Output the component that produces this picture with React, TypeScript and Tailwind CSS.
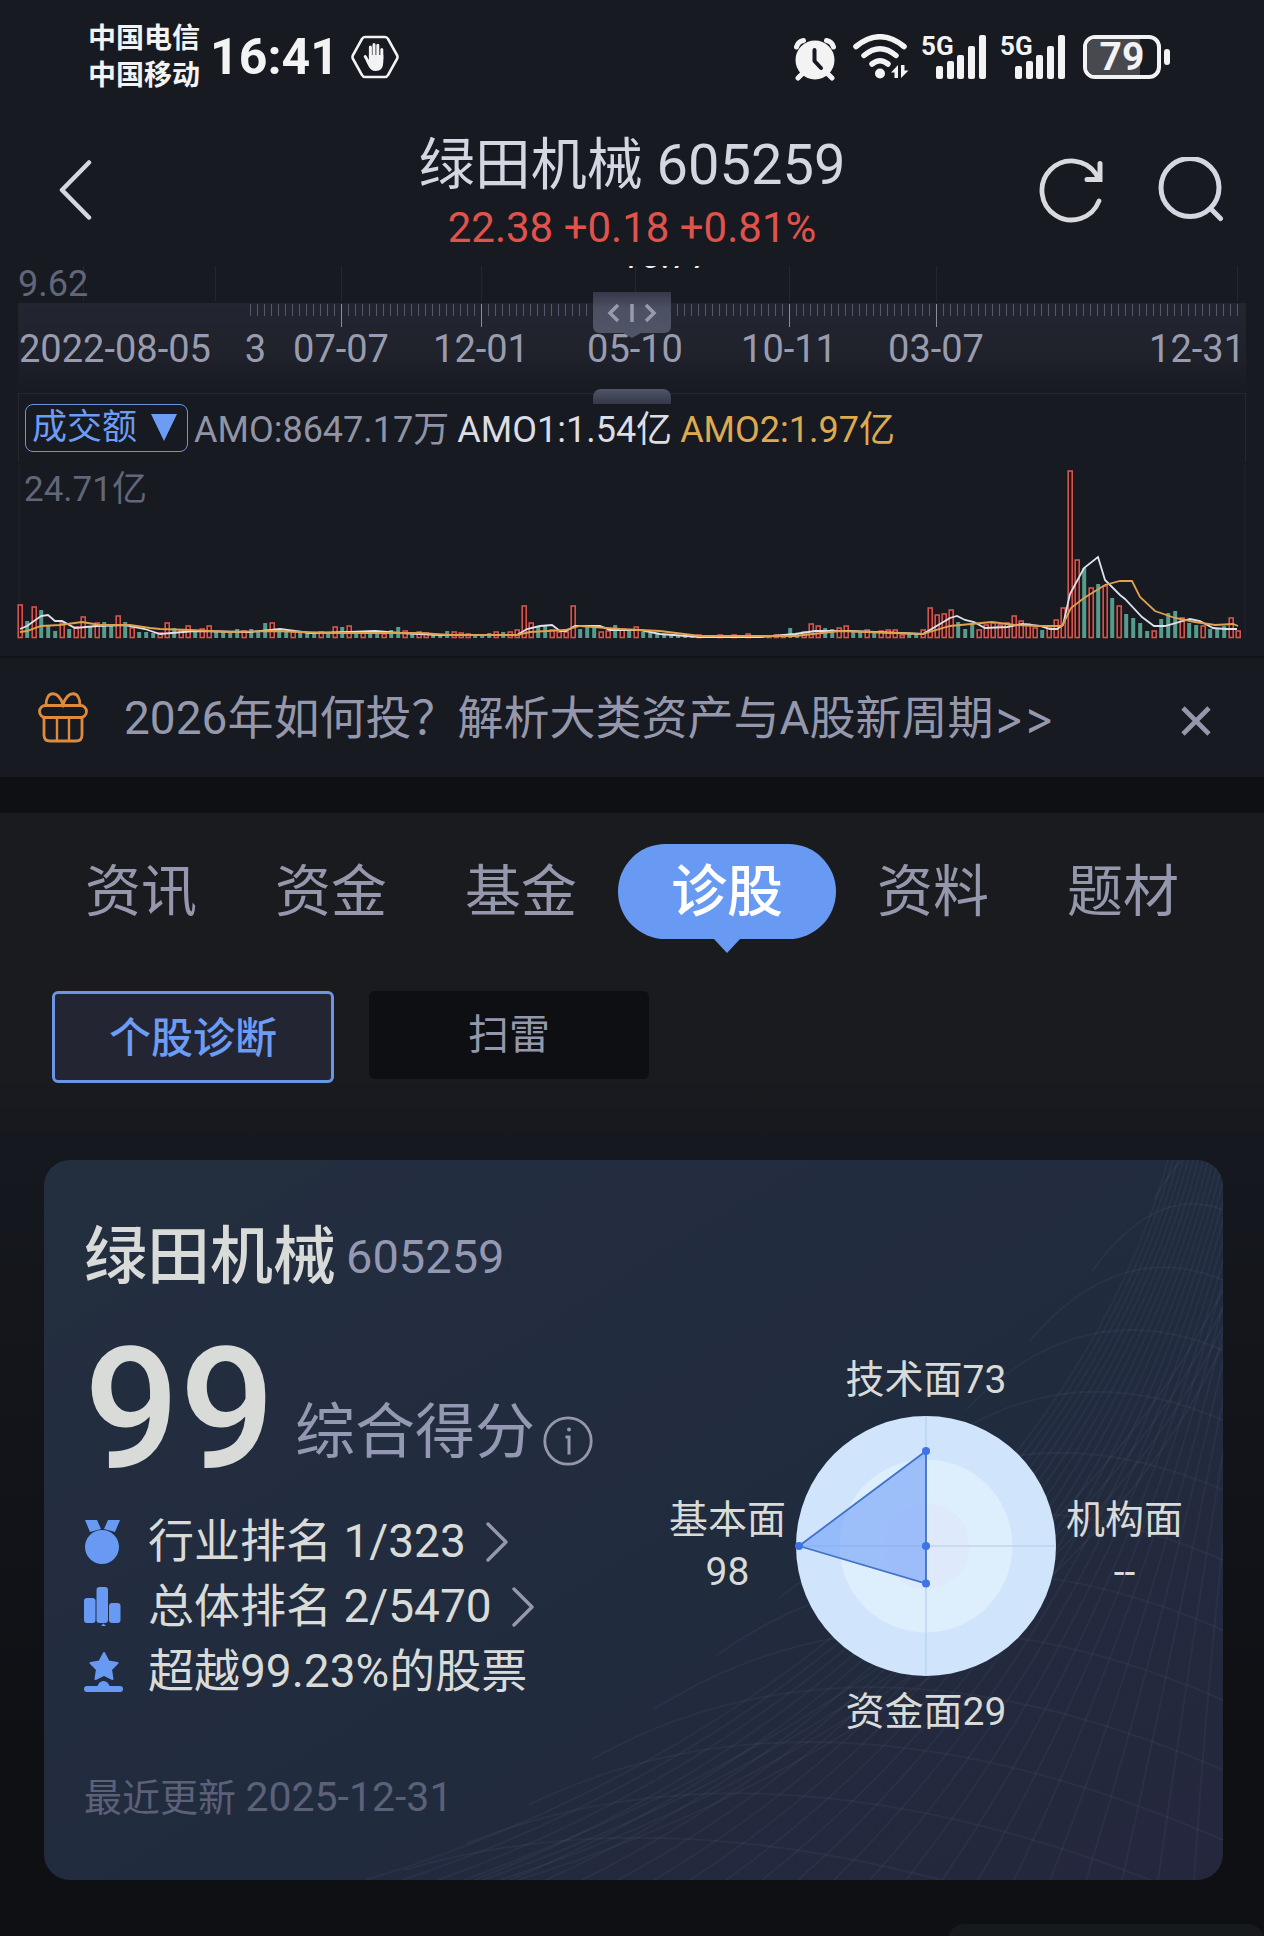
import { clsx } from "clsx";

const NAV_TABS = ["资讯", "资金", "基金", "诊股", "资料", "题材"];
const ACTIVE_TAB = "诊股";

const CHART_WIDTH = 1228;
const GRID_LINES = [65, 197, 323, 463, 617, 771, 918, 1219];
const MAJOR_TICKS = [323, 463, 617, 771, 918];
const MINOR_TICKS = Array.from({ length: 142 }, (_, i) => 232 + i * 7);

const DATES = [
  { label: "07-07", x: 323 },
  { label: "12-01", x: 463 },
  { label: "05-10", x: 617 },
  { label: "10-11", x: 771 },
  { label: "03-07", x: 918 },
];

// One entry per bar: r = up (hollow red), g = down (solid green), then the height
const VOLUME =
  "r33 g17 r31 g28 g12 g7 r15 g9 r11 r21 g12 r15 g16 g12 r22 g16 r10 g6 g6 g5 r5 r15 g10 r8 r12 " +
  "g7 r9 r12 g7 g7 g7 g9 r7 g9 g7 g15 r15 g8 g7 r6 g6 g5 g5 r6 g5 r11 g11 r12 g7 r6 " +
  "g7 g6 r4 g8 g11 r7 g6 r6 r5 g4 g4 g7 r6 r5 r4 g4 g4 g5 r6 g6 r6 r8 r32 r15 g12 " +
  "g12 r8 r6 r6 r32 g9 g11 g12 r6 r7 g13 r9 g8 r11 g6 g5 g5 g4 g4 g3 g3 g3 r3 g2 g2 " +
  "r3 g2 r3 g1 r4 g1 g1 r2 r3 r3 g10 g5 r6 r14 r12 g10 g9 r10 r12 g7 g6 r8 g6 r7 r8 " +
  "r8 r3 g4 g5 r8 r30 r23 r24 r28 g16 g9 g15 r8 r13 r15 r13 r15 r22 r17 r14 r10 g8 r10 r18 r30 " +
  "r167 r78 g70 r50 g54 r52 g40 r32 g24 g20 g15 g7 r7 g19 g25 g27 r20 g15 g13 r12 g9 g10 g12 r20 r7";

const BARS = VOLUME.split(" ").map((bar) => ({
  up: bar[0] === "r",
  height: Number(bar.slice(1)),
}));

const AMO1_LINE =
  "2,165 9,162 23,152 30,151 37,157 44,157 57,164 79,162 107,161 127,165 142,170 177,167 232,168 262,165 292,169 332,168 357,167 382,169 422,171 499,171 509,165 522,162 534,161 542,167 548,167 557,162 582,162 592,166 622,166 642,170 682,173 742,173 777,170 797,167 832,167 882,169 905,170 932,154 939,152 947,156 956,158 967,164 989,163 1004,160 1022,162 1032,165 1039,165 1045,161 1052,130 1066,104 1080,93 1087,116 1102,131 1107,135 1124,153 1136,162 1147,162 1172,155 1182,157 1195,164 1207,165 1219,165";
const AMO2_LINE =
  "2,168 9,167 23,162 42,161 64,158 82,161 112,161 132,164 142,165 172,166 212,168 257,167 312,169 402,169 432,171 499,171 512,168 547,166 562,162 602,165 642,167 682,172 777,172 822,167 904,170 932,162 974,158 997,161 1022,162 1044,162 1053,144 1066,134 1087,121 1102,117 1114,117 1122,133 1137,147 1157,154 1177,158 1197,161 1215,160 1220,162";

function SignalIcon() {
  return (
    <div className="relative h-11 w-[65px]">
      <span className="absolute left-0 top-0 text-[26px] leading-[22px] font-bold">
        5G
      </span>
      <svg viewBox="0 0 65 44" className="h-11 w-[65px]" fill="currentColor">
        <rect x="15" y="31" width="7" height="13" rx="2" />
        <rect x="26" y="26" width="7" height="18" rx="2" />
        <rect x="36" y="20" width="7" height="24" rx="2" />
        <rect x="47" y="11" width="7" height="33" rx="2" />
        <rect x="58" y="0" width="7" height="44" rx="2" />
      </svg>
    </div>
  );
}

function StatusBar() {
  return (
    <div className="flex h-[114px] items-center justify-between pl-[88px] pr-[94px] text-[#f3f3f3]">
      <div className="flex items-center">
        <div className="text-[28px] leading-[37px] font-bold">
          <p>中国电信</p>
          <p>中国移动</p>
        </div>
        <span className="ml-2.5 text-[50px] leading-[50px] font-bold">
          16:41
        </span>
        <svg viewBox="0 0 48 44" className="ml-3 h-11 w-12">
          <path
            d="M14 2 H34 Q36 2 37 4 L46 20 Q47 22 46 24 L37 40 Q36 42 34 42 H14 Q12 42 11 40 L2 24 Q1 22 2 20 L11 4 Q12 2 14 2Z"
            fill="none"
            stroke="currentColor"
            strokeWidth="2.6"
          />
          <g stroke="currentColor" strokeWidth="3" strokeLinecap="round">
            <path d="M19.4 22V12M23 20V9.6M26.8 20V10.2M30.8 24V14.4M14.2 21.6L18 28" />
          </g>
          <path
            d="M17.9 20H32.3V27Q32.3 36 24.6 36Q19.8 36 17.4 31L15 26L17.9 25.6Z"
            fill="currentColor"
          />
        </svg>
      </div>

      <div className="flex items-center">
        <svg viewBox="0 0 44 44" className="mt-1 h-11 w-11">
          <g stroke="currentColor" strokeWidth="5" strokeLinecap="round">
            <path d="M10 36L5 41M34 36L39 41" />
            <path d="M3.5 10Q5 4.5 10.5 3.5M40.5 10Q39 4.5 33.5 3.5" fill="none" />
          </g>
          <circle cx="22" cy="23" r="19.5" fill="currentColor" />
          <path
            d="M21.5 13V24L28 31"
            fill="none"
            stroke="#171a20"
            strokeWidth="4"
            strokeLinecap="round"
            strokeLinejoin="round"
          />
        </svg>
        <svg viewBox="0 0 58 46" className="ml-4 h-[46px] w-[58px]">
          <g fill="none" stroke="currentColor" strokeWidth="5.5" strokeLinecap="round">
            <path d="M3 12.5Q27 -7 51 12.5" />
            <path d="M11 21.5Q27 8 43 21.5" />
            <path d="M19 30Q27 23.5 35 30" />
          </g>
          <circle cx="27" cy="39.5" r="5" fill="currentColor" />
          <path
            d="M45 44V31L38 38.5H41.5V44ZM48 31V44L55.5 36.5H51.5V31Z"
            fill="currentColor"
          />
        </svg>
        <div className="ml-2.5 flex gap-3.5">
          <SignalIcon />
          <SignalIcon />
        </div>
        <div className="ml-[18px] flex items-center gap-[3px]">
          <div className="relative flex h-11 w-[78px] items-center justify-center rounded-[12px] border-4 border-current">
            <div className="absolute inset-y-0 left-0 w-[53px] rounded-l-[8px] bg-[#48494e]" />
            <span className="relative text-[39px] leading-9 font-bold">79</span>
          </div>
          <div className="h-4 w-1.5 rounded-full bg-current" />
        </div>
      </div>
    </div>
  );
}

function Header() {
  return (
    <header className="relative flex h-[152px] items-center justify-between pl-[58px] pr-10">
      <button type="button" aria-label="返回" className="text-[#d4d7e2]">
        <svg viewBox="0 0 34 60" className="h-[60px] w-[34px]">
          <path
            d="M31 2.5L4 30L31 57.5"
            fill="none"
            stroke="currentColor"
            strokeWidth="4.5"
            strokeLinecap="round"
            strokeLinejoin="round"
          />
        </svg>
      </button>
      <div className="absolute inset-x-0 top-[19px] mx-auto w-fit text-center">
        <h1 className="text-[56px] leading-[64px] text-[#d4d7e2]">
          绿田机械 605259
        </h1>
        <p className="text-[42px] leading-[62px] text-[#e0534d]">
          22.38 +0.18 +0.81%
        </p>
      </div>
      <div className="flex items-center gap-[54px]">
        <button type="button" aria-label="刷新" className="text-[#d9dae0]">
          <svg viewBox="0 0 66 66" className="h-[66px] w-[66px]">
            <g
              fill="none"
              stroke="currentColor"
              strokeWidth="4.8"
              strokeLinecap="round"
            >
              <path d="M61 44A29.5 29.5 0 1 1 58 17L61 22" />
              <path d="M62 6.5V22.5H49" strokeWidth="5" />
            </g>
          </svg>
        </button>
        <button type="button" aria-label="搜索" className="text-[#d4d7e2]">
          <svg viewBox="0 0 66 66" className="h-[66px] w-[66px]">
            <g
              fill="none"
              stroke="currentColor"
              strokeWidth="5"
              strokeLinecap="round"
            >
              <circle cx="32" cy="30.5" r="29" />
              <path d="M53 52L62.5 61.5" />
            </g>
          </svg>
        </button>
      </div>
    </header>
  );
}

function TimeAxis() {
  return (
    <>
      <div className="relative h-[37px] overflow-hidden text-[36px] leading-9 text-[#626679]">
        <svg
          viewBox={`0 0 ${CHART_WIDTH} 37`}
          preserveAspectRatio="none"
          className="absolute inset-0 h-full w-full"
        >
          {GRID_LINES.map((x) => (
            <path key={x} d={`M${x + 0.5} 0V35`} stroke="#24272e" />
          ))}
        </svg>
        <span className="relative">9.62</span>
        <span className="absolute -top-7 left-[49%] text-[#f0f0f2]">
          16.77
        </span>
      </div>
      <div className="relative h-[90px] bg-linear-to-b from-[#232630] via-[#1f212b] via-60% to-[#171a20] text-[38px] leading-[92px] text-[#999caf]">
        <svg
          viewBox={`0 0 ${CHART_WIDTH} 90`}
          preserveAspectRatio="none"
          className="absolute inset-0 h-full w-full"
        >
          {MINOR_TICKS.map((x) => (
            <path key={x} d={`M${x + 0.5} 1V13`} stroke="#555868" />
          ))}
          {MAJOR_TICKS.map((x) => (
            <path key={x} d={`M${x + 0.5} 1V24`} stroke="#8a8d9c" />
          ))}
        </svg>
        <div className="relative flex justify-between px-px">
          <span>
            2022-08-05
            <span className="ml-[34px] inline-block">3</span>
          </span>
          <span>12-31</span>
        </div>
        {DATES.map(({ label, x }) => (
          <span
            key={label}
            className="absolute top-0 -translate-x-1/2"
            style={{ left: `${(x / CHART_WIDTH) * 100}%` }}
          >
            {label}
          </span>
        ))}
        <svg
          viewBox="0 0 78 46"
          className="absolute -top-[11px] left-1/2 h-[46px] w-[78px] -translate-x-1/2"
        >
          <defs>
            <linearGradient id="knob" x1="0" y1="0" x2="0" y2="1">
              <stop offset="0" stopColor="#343847" />
              <stop offset="0.35" stopColor="#4b5063" />
              <stop offset="1" stopColor="#505568" />
            </linearGradient>
          </defs>
          <path
            d="M0 0H78V34Q78 41 71 41H48L39 46L30 41H7Q0 41 0 34Z"
            fill="url(#knob)"
          />
          <g fill="none" stroke="#989bae" strokeWidth="3.5">
            <path d="M25 13L17 21L25 29M53 13L61 21L53 29M39 12V30" />
          </g>
        </svg>
        <div className="absolute -bottom-[11px] left-1/2 h-[15px] w-[78px] -translate-x-1/2 rounded-t-[8px] bg-linear-to-b from-[#50556a] to-[#343847]" />
      </div>
    </>
  );
}

function VolumeChart() {
  return (
    <section className="px-[18px]">
      <TimeAxis />
      <div className="flex h-[69px] items-center gap-1.5 border border-b-0 border-[#24272e] pl-1.5 text-[36px] whitespace-nowrap">
        <div className="relative text-[#6c9cf3]">
          <select
            aria-label="指标"
            className="block h-12 w-[163px] appearance-none rounded-lg border border-[#6a94dc] bg-transparent pl-1.5 text-[35px] leading-10"
          >
            <option>成交额</option>
          </select>
          <svg
            viewBox="0 0 26 27"
            className="pointer-events-none absolute right-[11px] top-2.5 h-[27px] w-[26px]"
          >
            <path d="M0 0H26L13 27Z" fill="currentColor" />
          </svg>
        </div>
        <div className="flex gap-2 pt-1">
          <span className="text-[#9194a6]">AMO:8647.17万</span>
          <span className="text-[#dcdde5]">AMO1:1.54亿</span>
          <span className="text-[#dfa94f]">AMO2:1.97亿</span>
        </div>
      </div>
      <div className="relative mt-0.5 h-[174px] border-x-2 border-[#1c1f27]">
        <span className="absolute left-1 top-0 text-[35px] leading-[52px] text-[#626679]">
          24.71亿
        </span>
        <svg
          viewBox={`0 0 ${CHART_WIDTH} 174`}
          preserveAspectRatio="none"
          className="absolute -left-0.5 top-0 h-full w-[calc(100%+4px)] overflow-visible"
        >
          {BARS.map(({ up, height }, i) =>
            up ? (
              <rect
                key={i}
                x={i * 7 + 0.2}
                y={174 - height}
                width="4"
                height={height - 0.5}
                fill="#2a0f12"
                stroke="#d2564f"
                strokeWidth="1.6"
              />
            ) : (
              <rect
                key={i}
                x={i * 7 + 0.2}
                y={174 - height}
                width="4"
                height={height}
                fill="#559c8a"
              />
            ),
          )}
          <polyline points={AMO1_LINE} fill="none" stroke="#dfe1ec" strokeWidth="1.8" />
          <polyline points={AMO2_LINE} fill="none" stroke="#dfa24d" strokeWidth="1.8" />
        </svg>
      </div>
    </section>
  );
}

function PromoBanner() {
  return (
    <div className="mt-[18px] flex h-[121px] items-center border-t-2 border-[#111317] pl-[38px] pr-[53px] text-[#9598ac]">
      <svg viewBox="0 0 50 52" className="h-[52px] w-[50px] shrink-0">
        <g fill="none" stroke="#e08a3e" strokeWidth="2.8">
          <rect x="1.5" y="13.5" width="47" height="12" rx="6" />
          <path d="M6 25.5V43Q6 49 12 49H38Q44 49 44 43V25.5" />
          <path d="M19 26V49M31 26V49" strokeWidth="2.4" />
          <path d="M8 13.5C8 -2 20 -2 25 12.5C30 -2 42 -2 42 13.5" />
        </g>
      </svg>
      <a href="#promo" className="ml-9 flex-1 text-[46px] leading-[60px] whitespace-nowrap">
        2026年如何投？解析大类资产与A股新周期
        <span className="font-[Inter,sans-serif]">&gt;&gt;</span>
      </a>
      <button type="button" aria-label="关闭" className="pt-1.5">
        <svg viewBox="0 0 30 30" className="h-[30px] w-[30px]">
          <path d="M2 2L28 28M28 2L2 28" stroke="currentColor" strokeWidth="4.6" />
        </svg>
      </button>
    </div>
  );
}

function NavTabs() {
  return (
    <nav className="flex justify-center text-[56px] leading-[92px] text-[#9598ac]">
      {NAV_TABS.map((tab) => {
        const active = tab === ACTIVE_TAB;
        return (
          <button
            key={tab}
            type="button"
            className={clsx(
              "relative h-[95px]",
              active
                ? "mx-0.5 rounded-full bg-[#699af3] px-[53px] font-medium text-white"
                : "px-[39px]",
            )}
          >
            {tab}
            {active && (
              <svg
                viewBox="0 0 28 15"
                className="absolute left-1/2 top-full -mt-px h-[15px] w-7 -translate-x-1/2"
              >
                <path d="M0 0H28L14 15Z" fill="#699af3" />
              </svg>
            )}
          </button>
        );
      })}
    </nav>
  );
}

const lerp = (a: number, b: number, t: number) => a + (b - a) * t;

function CardMesh() {
  // ribs fan out from the long left edge towards the right side of the card
  const ribs = Array.from({ length: 24 }, (_, i) => {
    const t = i / 23;
    return `M${lerp(322, 1150, t)} 720C${lerp(716, 1165, t)} ${lerp(600, 500, t)} ${lerp(1036, 1185, t)} ${lerp(320, 260, t)} ${lerp(1124, 1240, t)} 0`;
  });
  const folds = Array.from({ length: 4 }, (_, i) => {
    const d = i * 9;
    return `M${420 + d * 2} 720C${750 + d} ${600 + d} ${1040 + d} ${400 + d} 1179 ${130 + d * 2}`;
  });
  const arcs = Array.from({ length: 13 }, (_, i) => {
    const t = i / 12;
    return `M${lerp(360, 1110, t)} ${lerp(710, 40, t ** 1.3)}Q${lerp(700, 1150, t)} ${lerp(610, -30, t)} 1179 ${lerp(820, -20, t)}`;
  });
  return (
    <svg
      viewBox="0 0 1179 720"
      preserveAspectRatio="none"
      className="absolute inset-0 h-full w-full"
      fill="none"
      stroke="#8088a4"
      strokeOpacity="0.08"
      strokeWidth="2"
    >
      {[...ribs, ...folds, ...arcs].map((d) => (
        <path key={d} d={d} />
      ))}
    </svg>
  );
}

function MedalIcon() {
  return (
    <svg viewBox="0 0 37 44" className="h-11 w-[37px]" fill="#699af3">
      <path d="M1 0H13L17 9L6 12ZM24 0H36L31 12L20 9Z" />
      <circle cx="18" cy="27" r="17" />
    </svg>
  );
}

function PodiumIcon() {
  return (
    <svg viewBox="0 0 37 44" className="h-11 w-[37px]" fill="#699af3">
      <rect x="0" y="13" width="11.5" height="25" rx="3" />
      <rect x="12.5" y="2" width="11.5" height="36" rx="3" />
      <rect x="25" y="18" width="11.5" height="20" rx="3" />
      <path d="M17 41L19.5 38.5L22 41Z" />
    </svg>
  );
}

function StarIcon() {
  return (
    <svg viewBox="0 0 39 44" className="h-11 w-[39px]" fill="#699af3">
      <path
        d="M20 3L24.5 11.5L33.5 13L27 19.5L28.5 29L20 24.8L11.5 29L13 19.5L6.5 13L15.5 11.5Z"
        stroke="#699af3"
        strokeWidth="2"
        strokeLinejoin="round"
      />
      <path d="M13 37Q15 31 19.5 31Q24 31 26 37Z" />
      <rect x="0" y="36" width="39" height="6" rx="3" />
    </svg>
  );
}

const RANKS = [
  { icon: <MedalIcon />, text: "行业排名 1/323", link: true },
  { icon: <PodiumIcon />, text: "总体排名 2/5470", link: true },
  { icon: <StarIcon />, text: "超越99.23%的股票", link: false },
];

function RankChevron() {
  return (
    <svg viewBox="0 0 22 40" className="ml-5 h-10 w-[22px]">
      <path
        d="M2 2L20 20L2 38"
        fill="none"
        stroke="#9598ac"
        strokeWidth="3.4"
        strokeLinecap="round"
        strokeLinejoin="round"
      />
    </svg>
  );
}

function RadarChart() {
  return (
    <div className="flex flex-col items-center gap-2.5 pt-1 text-[39px] leading-[52px] text-[#d8dbd8]">
      <span>技术面73</span>
      <div className="flex items-center gap-2.5">
        <div className="text-center">
          <p>基本面</p>
          <p>98</p>
        </div>
        <svg viewBox="0 0 260 260" className="h-[260px] w-[260px] overflow-visible">
          <circle cx="130" cy="130" r="130" fill="#d0e4fc" />
          <circle cx="130" cy="130" r="86.5" fill="#ddeefc" />
          <circle cx="130" cy="130" r="43" fill="#dee9fb" />
          <path d="M0 130H260" stroke="#b4c9e4" />
          <path d="M130 0V260" stroke="#b9d6f2" strokeWidth="1.5" />
          <path
            d="M130 35L3 130L130 167.5Z"
            fill="#6699f7"
            fillOpacity="0.55"
            stroke="#4173c6"
            strokeWidth="1.8"
          />
          <g fill="#3d73e4">
            <circle cx="130" cy="35" r="4" />
            <circle cx="3" cy="130" r="4" />
            <circle cx="130" cy="130" r="4" />
            <circle cx="130" cy="167.5" r="4" />
          </g>
        </svg>
        <div className="text-center">
          <p>机构面</p>
          <p>--</p>
        </div>
      </div>
      <span>资金面29</span>
    </div>
  );
}

function DiagnosisCard() {
  return (
    <section className="relative mt-[77px] mr-[41px] ml-11 overflow-hidden rounded-[26px] bg-linear-to-br from-[#232e3f] via-[#212b3e] via-60% to-[#25273d] px-10 pt-[57px] pb-[56px] text-[#d8dbd8]">
      <CardMesh />
      <div className="relative flex items-center gap-2.5 leading-[80px]">
        <h2 className="text-[63px] font-medium">绿田机械</h2>
        <span className="text-[47px] text-[#9598b2]">605259</span>
      </div>
      <div className="relative mt-[53px] flex items-start justify-between whitespace-nowrap">
        <div>
          <div className="flex items-end">
            <strong className="text-[168px] leading-[120px] font-medium">
              99
            </strong>
            <span className="ml-5 text-[60px] leading-[74px] text-[#9598b2]">
              综合得分
            </span>
            <button type="button" aria-label="评分说明" className="mb-1 ml-2 text-[#9598a8]">
              <svg viewBox="0 0 50 50" className="h-[50px] w-[50px]">
                <circle
                  cx="25"
                  cy="25"
                  r="23.2"
                  fill="none"
                  stroke="currentColor"
                  strokeWidth="2.8"
                />
                <circle cx="26" cy="13.5" r="2" fill="currentColor" />
                <path d="M22.5 21H26V38.5" fill="none" stroke="currentColor" strokeWidth="3" />
              </svg>
            </button>
          </div>
          <ul className="mt-[39px] text-[46px] leading-[65px]">
            {RANKS.map(({ icon, text, link }) => (
              <li key={text} className="flex h-[65px] items-center">
                <div className="mr-[26px] w-[38px] shrink-0">{icon}</div>
                {link ? (
                  <a href="#rank" className="flex items-center">
                    {text}
                    <RankChevron />
                  </a>
                ) : (
                  text
                )}
              </li>
            ))}
          </ul>
          <p className="mt-[67px] text-[38px] leading-[52px] text-[#5c6078]">
            最近更新 <time className="text-[41px]">2025-12-31</time>
          </p>
        </div>
        <RadarChart />
      </div>
    </section>
  );
}

export default function App() {
  return (
    <div className="h-screen overflow-hidden bg-[#0f1014] font-[Roboto,'Noto_Sans_CJK_SC',sans-serif]">
      <div className="bg-[#171a20]">
        <StatusBar />
        <Header />
        <VolumeChart />
        <PromoBanner />
      </div>
      <main className="mt-9 bg-linear-to-b from-[#1a1b1f] from-22% via-[#15181e] via-28% to-[#0f1014] to-80% pt-[31px]">
        <NavTabs />
        <div className="mt-[52px] flex items-start gap-[35px] pl-[52px]">
          <button
            type="button"
            className="h-[92px] w-[282px] rounded-[6px] border-[3px] border-[#6b96e2] bg-[#232632] pt-0.5 text-[42px] font-medium text-[#6c9cf3]"
          >
            个股诊断
          </button>
          <button
            type="button"
            className="h-[88px] w-[280px] rounded-[6px] bg-[#0e0f13] pt-0.5 text-[41px] text-[#9598ac]"
          >
            扫雷
          </button>
        </div>
        <DiagnosisCard />
        <div className="mt-[44px] ml-auto h-16 w-[316px] rounded-t-[16px] bg-[#16191e]" />
      </main>
    </div>
  );
}
